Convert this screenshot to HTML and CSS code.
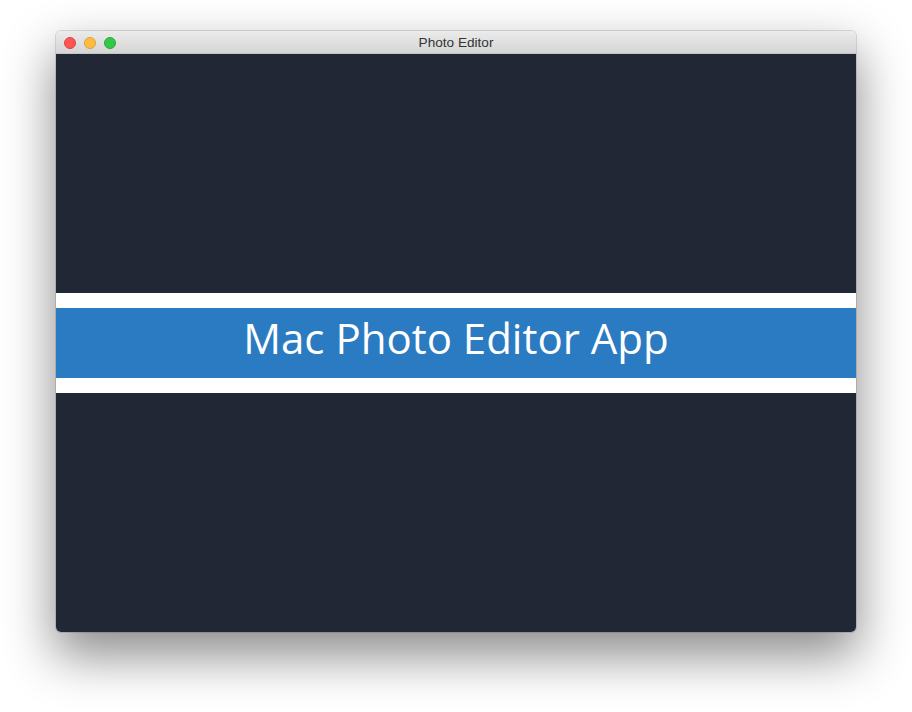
FILE: index.html
```html
<!DOCTYPE html>
<html>
<head>
<meta charset="utf-8">
<link rel="stylesheet" href="styles.css">
</head>
<body>
<div class="window">
  <div class="titlebar">
    <div class="lights">
      <span class="light red"></span>
      <span class="light yellow"></span>
      <span class="light green"></span>
    </div>
    <div class="title">Photo Editor</div>
  </div>
  <div class="content">
    <div class="banner">
      <div class="banner-inner">Mac Photo Editor App</div>
    </div>
  </div>
</div>
</body>
</html>
```
FILE: styles.css
```css
html, body {
  margin: 0;
  padding: 0;
  background: #ffffff;
}
body {
  width: 912px;
  height: 712px;
  box-sizing: border-box;
  padding: 31px 56px 0 56px;
  overflow: hidden;
}
.window {
  width: 800px;
  height: 601px;
  border-radius: 5px;
  overflow: hidden;
  display: flex;
  flex-direction: column;
  box-shadow: 0 22px 50px 2px rgba(0, 0, 0, 0.45), 0 0 0 1px rgba(0,0,0,0.12);
}
.titlebar {
  height: 23px;
  flex: 0 0 23px;
  position: relative;
  background: linear-gradient(#ebebeb, #d5d5d5);
  border-bottom: 1px solid #c4c4c4;
  box-sizing: border-box;
  display: flex;
  align-items: center;
  justify-content: center;
}
.lights {
  position: absolute;
  left: 8px;
  top: 6px;
  display: flex;
  gap: 8px;
}
.light {
  width: 12px;
  height: 12px;
  border-radius: 50%;
  box-sizing: border-box;
}
.red { background: #fc5753; border: 1px solid #de4340; }
.yellow { background: #fdbc40; border: 1px solid #dea236; }
.green { background: #33c748; border: 1px solid #27aa35; }
.title {
  font-family: "Liberation Sans", Arial, sans-serif;
  font-size: 13.6px;
  color: #333333;
  line-height: 23px;
}
.content {
  flex: 1;
  background: #212735;
  display: flex;
  flex-direction: column;
  justify-content: center;
}
.banner {
  background: #ffffff;
  padding: 15px 0;
}
.banner-inner {
  background: #2a7bc1;
  height: 70px;
  display: flex;
  align-items: center;
  justify-content: center;
  color: #ffffff;
  font-family: "Open Sans", sans-serif;
  font-size: 42px;
  line-height: 1;
  padding-bottom: 10px;
  box-sizing: border-box;
}
```
